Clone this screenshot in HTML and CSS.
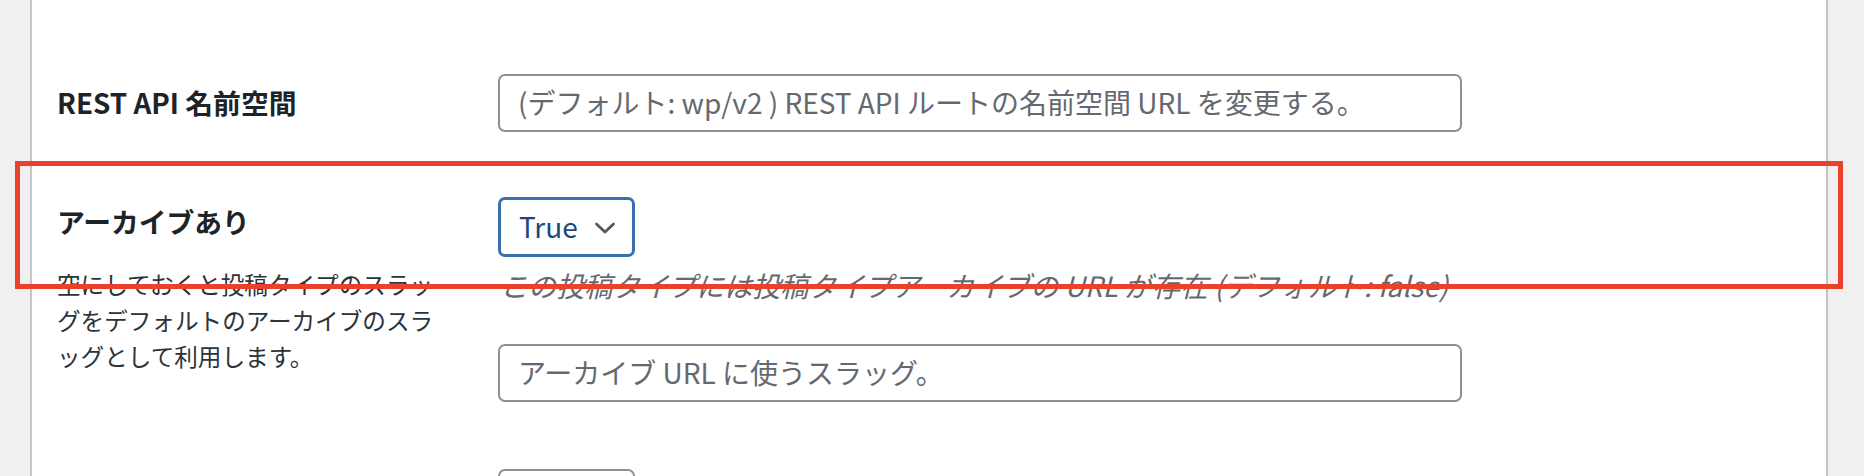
FILE: index.html
```html
<!DOCTYPE html>
<html lang="ja">
<head>
<meta charset="utf-8">
<title>CPT settings</title>
<link rel="stylesheet" href="styles.css">
</head>
<body>
<div class="panel">
  <div class="row row-a">
    <div class="th"><span class="label">REST API 名前空間</span></div>
    <div class="td">
      <div class="input"><span class="placeholder">(デフォルト: wp/v2 ) REST API ルートの名前空間 URL を変更する。</span></div>
    </div>
  </div>
  <div class="row row-b">
    <div class="th">
      <div class="label">アーカイブあり</div>
      <p class="side-desc">空にしておくと投稿タイプのスラッグをデフォルトのアーカイブのスラッグとして利用します。</p>
    </div>
    <div class="td">
      <div class="select focused">
        <span class="select-value">True</span>
        <svg class="chevron" width="22" height="14" viewBox="0 0 22 14"><path d="M2.5 3 L11 11 L19.5 3" fill="none" stroke="#50575e" stroke-width="2.8" stroke-linecap="round" stroke-linejoin="round"/></svg>
      </div>
      <p class="desc">この投稿タイプには投稿タイプアーカイブの URL が存在 (デフォルト: false)</p>
      <div class="input input-2"><span class="placeholder">アーカイブ URL に使うスラッグ。</span></div>
    </div>
  </div>
  <div class="row row-c">
    <div class="th"></div>
    <div class="td">
      <div class="select"></div>
    </div>
  </div>
</div>
<div class="highlight"></div>
</body>
</html>
```
FILE: styles.css
```css
html, body {
  margin: 0;
  padding: 0;
  height: 476px;
  overflow: hidden;
  background: #f0f0f1;
  font-family: "Noto Sans CJK JP", "Noto Sans", sans-serif;
}

body {
  position: relative;
}

.panel {
  margin-left: 30px;
  width: 1798px;
  height: 476px;
  box-sizing: border-box;
  border-left: 2px solid #c3c4c7;
  border-right: 2px solid #c3c4c7;
  background: #fff;
  padding-left: 25px;
  overflow: hidden;
}

.row {
  display: grid;
  grid-template-columns: 441px 964px;
}

.row-a {
  padding-top: 74px;
  align-items: center;
}

.row-a .label {
  display: block;
  margin-top: -3px;
}

.row-b {
  margin-top: 65px;
  align-items: start;
}

.row-c {
  margin-top: 67px;
}

.label {
  font-size: 27.8px;
  font-weight: 700;
  color: #1d2327;
  line-height: 36px;
}

.row-b .label {
  margin-top: 6px;
}

.side-desc {
  margin: 27px 0 0;
  width: 382px;
  font-size: 23.6px;
  line-height: 36px;
  color: #2c3338;
  line-break: anywhere;
}

.input {
  box-sizing: border-box;
  height: 58px;
  width: 964px;
  border: 2px solid #8c8f94;
  border-radius: 7px;
  display: flex;
  align-items: center;
  padding: 0 18px;
  background: #fff;
}

.placeholder {
  font-size: 28px;
  color: #646970;
  line-height: 36px;
  white-space: nowrap;
  margin-top: -2px;
}

.select {
  box-sizing: border-box;
  width: 137px;
  height: 60px;
  border: 2px solid #8c8f94;
  border-radius: 7px;
  display: flex;
  align-items: center;
  padding: 0 19px;
  justify-content: space-between;
  background: #fff;
}

.select.focused {
  border: 3px solid #3a6fae;
  padding: 0 16px 0 18px;
}

.select-value {
  font-size: 28px;
  color: #1c4a78;
  line-height: 36px;
  margin-top: -3px;
}

.chevron {
  display: block;
  margin-top: 1px;
}

.desc {
  margin: 10px 0 0 2px;
  font-size: 28px;
  line-height: 36px;
  font-style: italic;
  color: #646970;
  white-space: nowrap;
}

.input-2 {
  margin-top: 41px;
}

.highlight {
  position: absolute;
  left: 15px;
  top: 161px;
  width: 1828px;
  height: 128px;
  box-sizing: border-box;
  border: 5px solid #e9412a;
  pointer-events: none;
}
```
